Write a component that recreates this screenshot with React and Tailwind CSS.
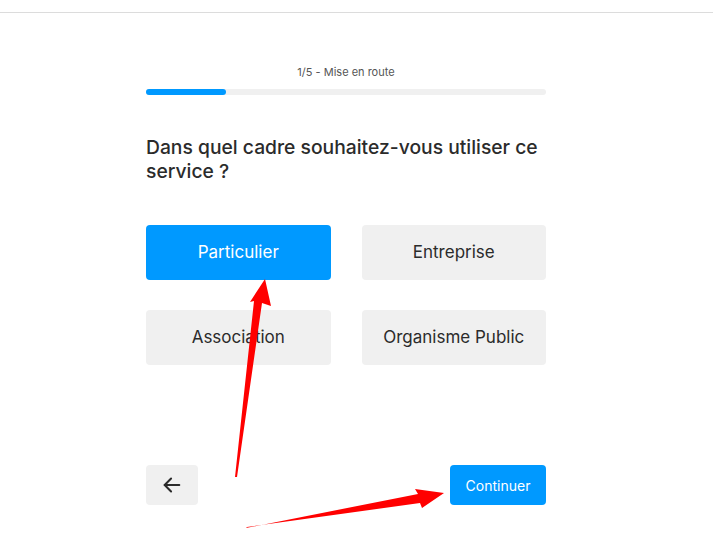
import React, { useState } from 'react';

const options = ['Particulier', 'Entreprise', 'Association', 'Organisme Public'];

export default function App() {
  const [selected, setSelected] = useState('Particulier');

  return (
    <div className="relative min-h-[558px] bg-white font-['Inter',Arial,sans-serif] text-[#2b2b2b]">
      <div className="h-[13px] border-b border-[#dcdcdc]" />

      <div className="w-[692px]">
        <div className="mx-auto w-[400px] pt-[52px]">
          <p className="text-center text-[11px] leading-[14px] text-[#555]">1/5 - Mise en route</p>
          <div className="mt-[10px] h-[6px] w-full rounded-full bg-[#f0f0f0]">
            <div className="h-full w-1/5 rounded-full bg-[#0099ff]" />
          </div>

          <h1 className="mt-[40px] text-[19.3px] font-medium leading-[24px] text-[#2b2b2b]">
            Dans quel cadre souhaitez-vous utiliser ce service ?
          </h1>

          <div className="mt-[42px] grid grid-cols-2 gap-x-[31px] gap-y-[30px]">
            {options.map((opt) => (
              <button
                key={opt}
                onClick={() => setSelected(opt)}
                className={
                  selected === opt
                    ? 'h-[55px] rounded-[4px] bg-[#0099ff] text-[17px] text-white'
                    : 'h-[55px] rounded-[4px] bg-[#f0f0f0] text-[17px] text-[#2b2b2b]'
                }
              >
                {opt}
              </button>
            ))}
          </div>

          <div className="mt-[100px] flex items-center justify-between">
            <button className="flex h-[40px] w-[52px] items-center justify-center rounded-[4px] bg-[#f0f0f0]" aria-label="Retour">
              <svg width="22" height="22" viewBox="0 0 24 24" fill="none" stroke="#2b2b2b" strokeWidth="2.2" strokeLinecap="round" strokeLinejoin="round">
                <path d="M20 12H4" />
                <path d="M11 5l-7 7 7 7" />
              </svg>
            </button>
            <button className="h-[40px] w-[96px] rounded-[4px] bg-[#0099ff] text-[14px] text-white">Continuer</button>
          </div>
        </div>
      </div>

      {/* annotation arrows */}
      <svg className="pointer-events-none absolute left-0 top-0" width="713" height="558" viewBox="0 0 713 558">
        <polygon fill="#ff0000" points="235,477 237,477 262,303 271,306 265,279 250,302 254,301" />
        <polygon fill="#ff0000" points="246,528 247,527 420,503 422,508 444,493 415,489 418,494" />
      </svg>
    </div>
  );
}
